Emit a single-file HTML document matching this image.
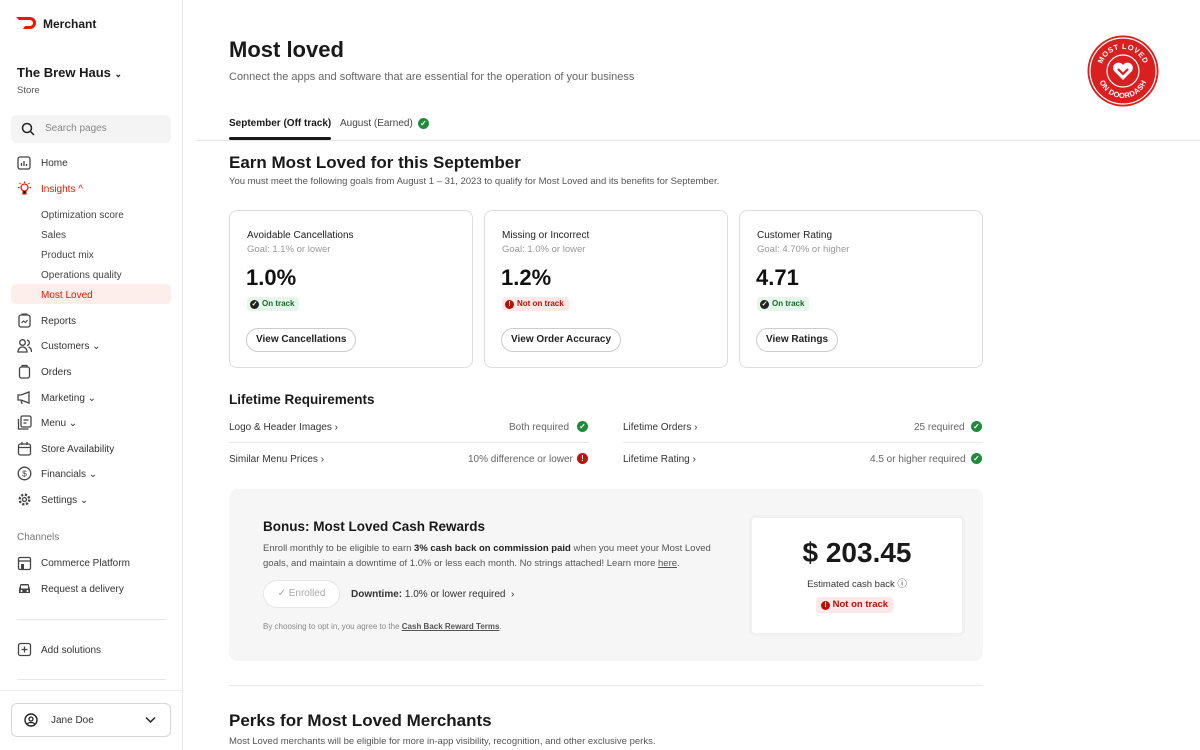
<!DOCTYPE html>
<html><head><meta charset="utf-8"><style>
*{box-sizing:border-box;margin:0;padding:0}
body{width:1200px;height:750px;overflow:hidden;font-family:"Liberation Sans",sans-serif;color:#191919;background:#fff;position:relative}
.abs{position:absolute}
.sb{position:absolute;left:0;top:0;width:183px;height:750px;border-right:1px solid #e6e6e6}
.nav{position:absolute;left:41px;font-size:10px;color:#333;white-space:nowrap;margin-top:1px}
.ic{position:absolute;left:17px;width:15px;height:15px}
.sub{position:absolute;left:41px;font-size:10px;color:#444;margin-top:1px}
.card{position:absolute;top:210px;width:244px;height:158px;border:1px solid #ddd;border-radius:8px}
.card .t{position:absolute;left:17px;top:19px;font-size:10px;color:#222}
.card .g{position:absolute;left:17px;top:33px;font-size:9.5px;color:#999}
.card .v{position:absolute;left:16px;top:54px;font-size:22px;font-weight:bold;color:#111}
.badge{position:absolute;left:17px;top:86px;height:14px;padding:0 5px 0 3px;border-radius:3px;font-size:8px;font-weight:bold;line-height:14px;display:flex;align-items:center;gap:3px}
.ok{background:#e6f6ea;color:#1a6b2d}.bad{background:#fde8e8;color:#b71000}
.dot{width:9px;height:9px;border-radius:50%;display:inline-block;color:#fff;font-size:7px;line-height:9px;text-align:center}
.btn{position:absolute;left:16px;top:117px;height:24px;padding:0 9px;border:1px solid #ccc;border-radius:12px;font-size:10px;font-weight:bold;line-height:22px;color:#222}
.row{position:absolute;font-size:10px;color:#333;margin-top:1px}
.chk{position:absolute;width:11px;height:11px;border-radius:50%;background:#1e8b3a;color:#fff;font-size:8px;line-height:11px;text-align:center;font-weight:bold}
.err{background:#c0110a}
</style></head><body>
<div class="sb">
 <svg class="abs" style="left:16px;top:17px" width="22" height="12" viewBox="0 0 22 12"><path d="M0 0h14a6 6 0 0 1 0 12H7l2-3h5a3 3 0 0 0 0-6H3z" fill="#eb1700"/></svg>
 <div class="abs" style="left:43px;top:17px;font-size:12px;font-weight:bold">Merchant</div>
 <div class="abs" style="left:17px;top:65px;font-size:13px;font-weight:bold">The Brew Haus <span style="font-size:9px">⌄</span></div>
 <div class="abs" style="left:17px;top:85px;font-size:9.5px;color:#555">Store</div>
 <div class="abs" style="left:11px;top:115px;width:160px;height:28px;background:#f4f4f4;border-radius:6px"></div>
 <svg class="abs" style="left:21px;top:122px" width="14" height="14" viewBox="0 0 14 14"><circle cx="6" cy="6" r="4.5" stroke="#222" stroke-width="1.5" fill="none"/><path d="M9.5 9.5l3.5 3.5" stroke="#222" stroke-width="1.5"/></svg>
 <div class="abs" style="left:45px;top:123px;font-size:10px;color:#888">Search pages</div>
 <svg class="ic" style="top:156px" viewBox="0 0 15 15"><rect x="1" y="1" width="12" height="12" rx="2" fill="none" stroke="#444" stroke-width="1.3"/><path d="M4.5 10V7M7 10V5M9.5 10V8" stroke="#444" stroke-width="1.3"/></svg>
 <div class="nav" style="top:157px">Home</div>
 <svg class="ic" style="top:181px" viewBox="0 0 15 15"><circle cx="7.5" cy="6.5" r="3.5" fill="none" stroke="#eb1700" stroke-width="1.3"/><path d="M6 10v3h3v-3M7.5 0.5v1.5M1 6.5h1.5M12.5 6.5H14M2.5 2l1 1M12.5 2l-1 1" stroke="#eb1700" stroke-width="1.2"/></svg>
 <div class="nav" style="top:183px;color:#eb1700">Insights ^</div>
 <div class="sub" style="top:209px">Optimization score</div>
 <div class="sub" style="top:229px">Sales</div>
 <div class="sub" style="top:249px">Product mix</div>
 <div class="sub" style="top:269px">Operations quality</div>
 <div class="abs" style="left:11px;top:284px;width:160px;height:20px;background:#fdeeec;border-radius:5px"></div>
 <div class="sub" style="top:289px;color:#eb1700">Most Loved</div>
 <svg class="ic" style="top:313px" viewBox="0 0 15 15"><rect x="2" y="2" width="11" height="12" rx="2" fill="none" stroke="#444" stroke-width="1.3"/><path d="M5 2V1h5v1M4.5 10l2-2 2 1.5 2-2.5" stroke="#444" stroke-width="1.1" fill="none"/></svg>
 <div class="nav" style="top:315px">Reports</div>
 <svg class="ic" style="top:338px" viewBox="0 0 15 15"><circle cx="5.5" cy="4.5" r="2.8" fill="none" stroke="#444" stroke-width="1.3"/><path d="M1 14c0-3 2-5 4.5-5s4.5 2 4.5 5zM10 2a2.8 2.8 0 0 1 0 5.5M11.5 9c2 .5 3 2.5 3 5" fill="none" stroke="#444" stroke-width="1.3"/></svg>
 <div class="nav" style="top:340px">Customers ⌄</div>
 <svg class="ic" style="top:364px" viewBox="0 0 15 15"><rect x="2.5" y="3" width="10" height="11" rx="2" fill="none" stroke="#444" stroke-width="1.3"/><path d="M5 3V1.5h5V3" stroke="#444" stroke-width="1.3" fill="none"/></svg>
 <div class="nav" style="top:366px">Orders</div>
 <svg class="ic" style="top:390px" viewBox="0 0 15 15"><path d="M1 5h3l8-3v11l-8-3H1zM4 10l1 4" fill="none" stroke="#444" stroke-width="1.3"/></svg>
 <div class="nav" style="top:392px">Marketing ⌄</div>
 <svg class="ic" style="top:415px" viewBox="0 0 15 15"><rect x="4" y="1" width="10" height="11" rx="1.5" fill="none" stroke="#444" stroke-width="1.3"/><path d="M1.5 4v10h10M6.5 5h5M6.5 8h3" stroke="#444" stroke-width="1.3" fill="none"/></svg>
 <div class="nav" style="top:417px">Menu ⌄</div>
 <svg class="ic" style="top:441px" viewBox="0 0 15 15"><rect x="1.5" y="3" width="12" height="11" rx="2" fill="none" stroke="#444" stroke-width="1.3"/><path d="M1.5 6.5h12M5 1v3M10 1v3" stroke="#444" stroke-width="1.3"/></svg>
 <div class="nav" style="top:443px">Store Availability</div>
 <svg class="ic" style="top:466px" viewBox="0 0 15 15"><circle cx="7.5" cy="7.5" r="6.3" fill="none" stroke="#444" stroke-width="1.3"/><text x="7.5" y="10.5" font-size="8.5" text-anchor="middle" fill="#444" font-family="Liberation Sans">$</text></svg>
 <div class="nav" style="top:468px">Financials ⌄</div>
 <svg class="ic" style="top:492px" viewBox="0 0 15 15"><circle cx="7.5" cy="7.5" r="4.8" fill="none" stroke="#444" stroke-width="2.4" stroke-dasharray="2.2 1.6"/><circle cx="7.5" cy="7.5" r="2" fill="none" stroke="#444" stroke-width="1.3"/></svg>
 <div class="nav" style="top:494px">Settings ⌄</div>
 <div class="abs" style="left:17px;top:532px;font-size:10px;color:#777">Channels</div>
 <svg class="ic" style="top:556px" viewBox="0 0 15 15"><rect x="1.5" y="1.5" width="12" height="12" rx="1.5" fill="none" stroke="#444" stroke-width="1.3"/><path d="M1.5 5h12" stroke="#444" stroke-width="1.3"/><rect x="4" y="8" width="3" height="5.5" fill="#444"/></svg>
 <div class="nav" style="top:557px">Commerce Platform</div>
 <svg class="ic" style="top:581px" viewBox="0 0 15 15"><path d="M2 8l1.5-5h8L13 8v4H2z" fill="#444"/><rect x="4" y="4.5" width="7" height="3" fill="#fff"/><circle cx="4.5" cy="10" r="1" fill="#fff"/><circle cx="10.5" cy="10" r="1" fill="#fff"/></svg>
 <div class="nav" style="top:583px">Request a delivery</div>
 <div class="abs" style="left:17px;top:619px;width:149px;height:1px;background:#e6e6e6"></div>
 <svg class="ic" style="top:642px" viewBox="0 0 15 15"><rect x="1.5" y="1.5" width="12" height="12" rx="2" fill="none" stroke="#444" stroke-width="1.3"/><path d="M7.5 4.5v6M4.5 7.5h6" stroke="#444" stroke-width="1.3"/></svg>
 <div class="nav" style="top:644px">Add solutions</div>
 <div class="abs" style="left:17px;top:679px;width:149px;height:1px;background:#e6e6e6"></div>
 <div class="abs" style="left:0;top:690px;width:183px;height:1px;background:#eee"></div>
 <div class="abs" style="left:11px;top:703px;width:160px;height:34px;border:1px solid #d6d6d6;border-radius:6px"></div>
 <svg class="abs" style="left:24px;top:713px" width="14" height="14" viewBox="0 0 14 14"><circle cx="7" cy="7" r="6" fill="none" stroke="#222" stroke-width="1.4"/><circle cx="7" cy="6" r="2" fill="none" stroke="#222" stroke-width="1.3"/><path d="M3.5 11c1-2 6-2 7 0" stroke="#222" stroke-width="1.3" fill="none"/></svg>
 <div class="abs" style="left:51px;top:715px;font-size:10px;color:#333">Jane Doe</div>
 <svg class="abs" style="left:145px;top:716px" width="11" height="8" viewBox="0 0 11 8"><path d="M1 1.5l4.5 4.5L10 1.5" stroke="#222" stroke-width="1.5" fill="none"/></svg>
</div>

<div class="abs" style="left:229px;top:37px;font-size:22px;font-weight:bold">Most loved</div>
<div class="abs" style="left:229px;top:71px;font-size:11px;color:#666">Connect the apps and software that are essential for the operation of your business</div>
<svg class="abs" style="left:1087px;top:35px" width="72" height="72" viewBox="0 0 72 72">
 <circle cx="36" cy="36" r="35.5" fill="#d91f1f"/><circle cx="36" cy="36" r="33" fill="none" stroke="#fff" stroke-width="1.2"/><circle cx="36" cy="36" r="16" fill="none" stroke="#fff" stroke-width="1.2"/>
 <path id="ta" d="M14 36a22 22 0 0 1 44 0" fill="none"/><path id="tb" d="M11 38a25 25 0 0 0 50 0" fill="none"/>
 <text font-size="7.5" font-weight="bold" fill="#fff" font-family="Liberation Sans" letter-spacing="0.5"><textPath href="#ta" startOffset="50%" text-anchor="middle">MOST LOVED</textPath></text>
 <text font-size="7.5" font-weight="bold" fill="#fff" font-family="Liberation Sans" letter-spacing="0.3"><textPath href="#tb" startOffset="50%" text-anchor="middle">ON DOORDASH</textPath></text>
 <path d="M36 45l-9-9a5 5 0 0 1 9-6a5 5 0 0 1 9 6z" fill="#fff"/><path d="M31 34l5 5 5-5" stroke="#d91f1f" stroke-width="2.2" fill="none"/>
</svg>
<div class="abs" style="left:229px;top:118px;font-size:10px;font-weight:bold">September (Off track)</div>
<div class="abs" style="left:229px;top:137px;width:102px;height:3px;background:#191919;border-radius:2px"></div>
<div class="abs" style="left:340px;top:118px;font-size:10px;color:#444">August (Earned)</div>
<div class="chk" style="left:418px;top:118px">✓</div>
<div class="abs" style="left:196px;top:140px;width:1004px;height:1px;background:#e6e6e6"></div>
<div class="abs" style="left:229px;top:153px;font-size:17px;font-weight:bold">Earn Most Loved for this September</div>
<div class="abs" style="left:229px;top:176px;font-size:9.5px;color:#555">You must meet the following goals from August 1 – 31, 2023 to qualify for Most Loved and its benefits for September.</div>

<div class="card" style="left:229px"><div class="t">Avoidable Cancellations</div><div class="g">Goal: 1.1% or lower</div><div class="v">1.0%</div><div class="badge ok"><span class="dot" style="background:#222">✓</span>On track</div><div class="btn">View Cancellations</div></div>
<div class="card" style="left:484px"><div class="t">Missing or Incorrect</div><div class="g">Goal: 1.0% or lower</div><div class="v">1.2%</div><div class="badge bad"><span class="dot" style="background:#b71000">!</span>Not on track</div><div class="btn">View Order Accuracy</div></div>
<div class="card" style="left:739px"><div class="t">Customer Rating</div><div class="g">Goal: 4.70% or higher</div><div class="v">4.71</div><div class="badge ok"><span class="dot" style="background:#222">✓</span>On track</div><div class="btn">View Ratings</div></div>

<div class="abs" style="left:229px;top:392px;font-size:13.5px;font-weight:bold">Lifetime Requirements</div>
<div class="row" style="left:229px;top:421px">Logo &amp; Header Images ›</div>
<div class="row" style="left:509px;top:421px;color:#666">Both required</div><div class="chk" style="left:577px;top:421px">✓</div>
<div class="abs" style="left:229px;top:442px;width:360px;height:1px;background:#e6e6e6"></div>
<div class="row" style="left:229px;top:453px">Similar Menu Prices ›</div>
<div class="row" style="left:468px;top:453px;color:#666">10% difference or lower</div><div class="chk err" style="left:577px;top:453px">!</div>
<div class="row" style="left:623px;top:421px">Lifetime Orders ›</div>
<div class="row" style="left:914px;top:421px;color:#666">25 required</div><div class="chk" style="left:971px;top:421px">✓</div>
<div class="abs" style="left:623px;top:442px;width:360px;height:1px;background:#e6e6e6"></div>
<div class="row" style="left:623px;top:453px">Lifetime Rating ›</div>
<div class="row" style="left:870px;top:453px;color:#666">4.5 or higher required</div><div class="chk" style="left:971px;top:453px">✓</div>

<div class="abs" style="left:229px;top:489px;width:754px;height:172px;background:#f6f6f6;border-radius:8px"></div>
<div class="abs" style="left:263px;top:519px;font-size:13.5px;font-weight:bold">Bonus: Most Loved Cash Rewards</div>
<div class="abs" style="left:263px;top:541px;width:452px;font-size:9.5px;line-height:15px;color:#555;overflow:hidden;height:30px">Enroll monthly to be eligible to earn <b style="color:#222">3% cash back on commission paid</b> when you meet your Most Loved goals, and maintain a downtime of 1.0% or less each month. No strings attached! Learn more <u>here</u>.</div>
<div class="abs" style="left:263px;top:580px;width:77px;height:28px;background:#fff;border:1px solid #e6e6e6;border-radius:14px;font-size:10px;color:#aaa;line-height:26px;text-align:center">✓ Enrolled</div>
<div class="abs" style="left:351px;top:589px;font-size:10px;color:#333"><b>Downtime:</b> 1.0% or lower required &nbsp;›</div>
<div class="abs" style="left:263px;top:622px;font-size:8px;color:#888">By choosing to opt in, you agree to the <b style="color:#555;text-decoration:underline">Cash Back Reward Terms</b>.</div>
<div class="abs" style="left:749px;top:515px;width:216px;height:121px;background:#fff;border:3px solid #f0f0f0;border-radius:6px"></div>
<div class="abs" style="left:749px;top:537px;width:216px;text-align:center;font-size:28px;font-weight:bold">$ 203.45</div>
<div class="abs" style="left:749px;top:576px;width:216px;text-align:center;font-size:9.5px;color:#333">Estimated cash back ⓘ</div>
<div class="abs" style="left:816px;top:597px;height:16px;padding:0 5px;background:#fde8e8;color:#b71000;font-size:9.5px;font-weight:bold;line-height:16px;border-radius:3px"><span class="dot" style="background:#b71000">!</span> Not on track</div>
<div class="abs" style="left:229px;top:685px;width:754px;height:1px;background:#e6e6e6"></div>
<div class="abs" style="left:229px;top:711px;font-size:17px;font-weight:bold">Perks for Most Loved Merchants</div>
<div class="abs" style="left:229px;top:736px;font-size:9.5px;color:#555">Most Loved merchants will be eligible for more in-app visibility, recognition, and other exclusive perks.</div>
</body></html>
